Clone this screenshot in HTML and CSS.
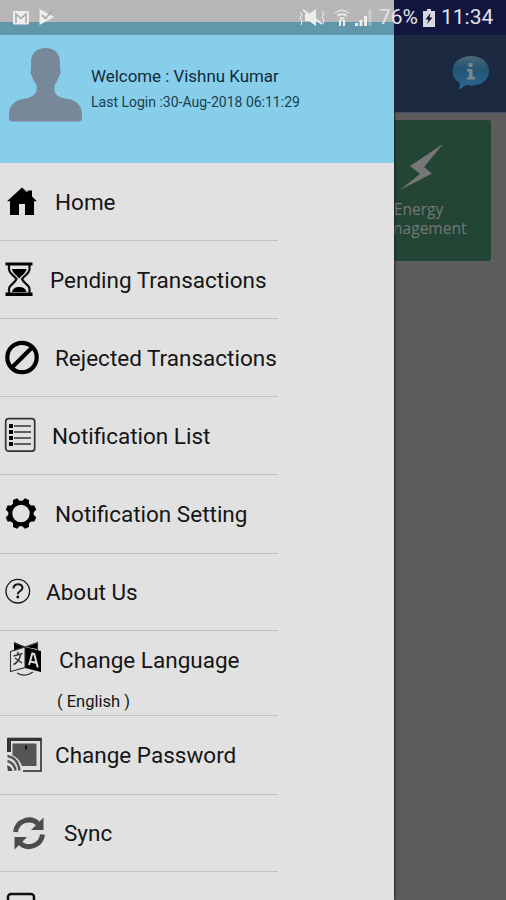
FILE: index.html
```html
<!DOCTYPE html>
<html lang="en">
<head>
<meta charset="utf-8">
<title>Menu</title>
<link rel="stylesheet" href="styles.css">
</head>
<body>
<div class="app">
  <div class="screen">
    <header class="toolbar">
      <svg class="info" viewBox="0 0 38 36" width="38" height="36">
        <defs><linearGradient id="bubble" x1="0" y1="0" x2="0" y2="1"><stop offset="0" stop-color="#4c6878"/><stop offset=".4" stop-color="#235476"/><stop offset="1" stop-color="#286b8c"/></linearGradient></defs>
        <path d="M19 1C8.500 1 .5 7.500.5 16c0 5.500 3 9.500 7.500 12l-1 6.500 7.500-4.500c1.500.3 3 .5 4.500.5 10.500 0 18-6 18-14.500S29.500 1 19 1z" fill="url(#bubble)"/>
        <path d="M16.500 8h4v4h-4zM15 14h5.500v8H23v2.500h-8V22h2v-5.500h-2z" fill="#7c8589"/>
      </svg>
    </header>
    <section class="tile">
      <svg viewBox="0 0 46 48" width="46" height="48"><path d="M44 1 11 23l10 8L1 47l32-16.500-8-6.500z" fill="#777"/></svg>
      <p>Energy<br>Management</p>
    </section>
  </div>

  <aside class="drawer">
    <div class="profile">
      <svg viewBox="0 35 91 128" width="91" height="128"><path d="M45.500 48C36 48 31 54 31 62v8c-1 1-.5 4 .6 5 1 5 3.500 7.500 5 10v5c0 4-5 7-10 8.500C15 99.500 9 105 9 115v3q0 3.500 4 3.500h65q4 0 4-3.500v-3c0-10-6-15.500-17-16.500-6-1-10.500-4-10.500-8.500v-5c2-3 4-6 5-10 1.500-1 1.500-4 .5-5v-8c0-8-5-14-14.500-14z" fill="#778899"/></svg>
      <div class="who"><p class="name">Welcome : Vishnu Kumar</p><p class="login">Last Login :30-Aug-2018 06:11:29</p></div>
    </div>
    <nav>
      <a class="row"><svg viewBox="0 163 55 77" width="55" height="77"><path d="m22 187.500 5.500 5v-2h4.500v6l5 4.700h-3V215H25v-11h-6v11h-9v-13.800H7z"/></svg><span>Home</span></a>
      <a class="row"><svg viewBox="0 241 50 77" width="50" height="77"><path d="M5.500 262.500h27v3h-27zM5.500 292.500h27v3.500h-27z"/><path d="M9 265v4c0 5 6 7 7.500 10C15 283 9 285 9 289v4M29.500 265v4c0 5-6 7-7.500 10 1.500 4 7.500 6 7.500 10v4" fill="none" stroke="#111" stroke-width="2.200"/><path d="M12 269h14.500c-.5 4-5 6.500-7.300 9.500C17 275.500 12.500 273 12 269zM12 292c1-4 4-5 7.200-5s6.300 1 7.300 5z"/></svg><span>Pending Transactions</span></a>
      <a class="row"><svg viewBox="0 319 55 77" width="55" height="77"><g fill="none" stroke="#000" stroke-width="4.200"><circle cx="22" cy="357.500" r="14.700"/><path d="m11.700 367.800 20.600-20.600"/></g></svg><span>Rejected Transactions</span></a>
      <a class="row"><svg viewBox="0 397 52 77" width="52" height="77"><rect x="5.700" y="418.700" width="29" height="32.500" rx="3" fill="none" stroke="#333" stroke-width="1.700"/><path d="M14 426h17M14 432h17M14 438h17M14 444h17" stroke="#333" stroke-width="1.500"/><path d="M9 424h4v4H9zM9 430h4v4H9zM9 436h4v4H9zM9 442h4v4H9z"/></svg><span>Notification List</span></a>
      <a class="row tall"><svg viewBox="0 475 55 78" width="55" height="78"><g transform="translate(21 513.500)"><circle r="10.700" fill="none" stroke="#000" stroke-width="4"/><path id="tooth" d="M-4-11-2.300-15.500h4.600L4-11z" transform="rotate(22.500)"/><use href="#tooth" transform="rotate(45)"/><use href="#tooth" transform="rotate(90)"/><use href="#tooth" transform="rotate(135)"/><use href="#tooth" transform="rotate(180)"/><use href="#tooth" transform="rotate(225)"/><use href="#tooth" transform="rotate(270)"/><use href="#tooth" transform="rotate(315)"/></g></svg><span>Notification Setting</span></a>
      <a class="row short"><svg viewBox="0 554 46 76" width="46" height="76"><g fill="none" stroke="#111"><circle cx="17.800" cy="591.200" r="11.800" stroke-width="1.300"/><path d="M13.500 588.500c0-5.500 9-5.500 9-.8 0 3.200-4.700 3.300-4.700 6.500" stroke-width="2"/></g><circle cx="17.800" cy="597" r="1.400"/></svg><span>About Us</span></a>
      <a class="row language"><svg viewBox="0 631 59 84" width="59" height="84"><path d="m25 647 16 4v21l-16-4z"/><path d="m14 642 11 5-11 4zM26 647l11-4v6"/><path d="m10.500 651.500 14.500-4.500v20.500l-14.500 4zM25 647l12.500-4.500v8M14 643l11 4" fill="none" stroke="#333" stroke-width="1.100"/><path d="m13.500 656 9-2.500M17.500 652l.8 3M20.500 655c-1 5-3.500 8-7 9.500M15 658l7 5M17 673c5 3 11 2.500 16-1" fill="none" stroke="#333" stroke-width="1.400"/><path d="m29 665 3.300-11.500 2 .5 3.500 13.500M30.500 661.500l5.500 1.200" fill="none" stroke="#e1e1e1" stroke-width="1.900"/></svg><span>Change Language<small>( English )</small></span></a>
      <a class="row tall"><svg viewBox="0 716 55 78" width="55" height="78"><path d="M8 750v-11.500h33V771H23" fill="none" stroke="#222" stroke-width="1.500"/><path d="M7 738h34v3H11v11H7z" fill="#333"/><path d="M12.500 743.500h24V766H22q-3-8-9.500-10.500z" fill="#555"/><path d="M26 745.500v4" stroke="#111" stroke-width="2"/><path d="M7.500 756q10.500 2 12 14.500M7.500 761q7 2 8 9.500" fill="none" stroke="#555" stroke-width="2.400"/><path d="M7 765.500q4.500.5 5.500 5.500H8z" fill="#444"/></svg><span>Change Password</span></a>
      <a class="row short"><svg viewBox="0 795 64 76" width="64" height="76"><path d="M15.500 832a13.500 13.500 0 0 1 23-8M42.500 834.500a13.500 13.500 0 0 1-23 8" fill="none" stroke="#4c4c4c" stroke-width="5"/><path d="M43.500 817.500V830H31zM14.500 849.500V837H27z" fill="#4c4c4c"/></svg><span>Sync</span></a>
      <a class="row last"><svg viewBox="0 872 55 77" width="55" height="77"><rect x="8" y="893" width="26" height="32" rx="3" fill="none" stroke="#111" stroke-width="2.500"/></svg></a>
    </nav>
  </aside>

  <div class="status">
    <svg viewBox="0 0 60 35" width="60" height="35"><rect x="13" y="11" width="16" height="13.500" rx="1" fill="#eee"/><path d="M16 23v-9l5 4.500 5-4.500v9" fill="none" stroke="#aaa" stroke-width="1.600"/><path d="m39.500 9 14.500 8-14.500 8z" fill="#eee"/><path d="m42 15 3.500 3.500 7-8" fill="none" stroke="#aaa" stroke-width="1.800"/></svg>
    <svg class="signals" viewBox="298 0 80 35" width="80" height="35"><g fill="#eee"><path d="M305 14h4l7-5v17l-7-5h-4z"/><path d="M334.500 13q7.500-7 15 0l-7.500 8z" opacity=".75"/><path d="M339 20h2v6h-2zM343 20h2v6h-2zM355 23h3v3h-3zM359.500 20h3v6h-3zM364 16h3v10h-3z"/><path d="M368.500 9h3v17h-3z" opacity=".35"/></g><path d="m303 10 19 14" stroke="#eee" stroke-width="2"/><path d="M300 12l2 3-2 3 2 3-1 4M322 11l2 3-2 3 2 3-1 4" stroke="#eee" fill="none"/><path d="M335 15q7-6 14 0M338 18q4-4 8 0" fill="none" stroke="#999"/></svg>
    <span class="percent">76%</span>
    <svg viewBox="0 0 12 18" width="12" height="18"><path d="M4 0h4v2h4v16H0V2h4z" fill="#d8d8df"/><path d="M7.500 4 2.500 10.500h3L4 15l5.500-6.500h-3z" fill="#111331"/></svg>
    <span class="clock">11:34</span>
  </div>
</div>
</body>
</html>
```
FILE: styles.css
```css
* { box-sizing: border-box; }
body { margin: 0; font-family: Roboto, sans-serif; }
p { margin: 0; }
svg { display: block; flex: none; }
.app { position: relative; width: 506px; height: 900px; overflow: hidden; }
.screen { height: 900px; background: #5c5c5c; }
.toolbar { display: flex; justify-content: flex-end; height: 113px; padding: 55px 16px 0 0; background: #1b2a41; border-bottom: 1px solid #425064; }
.tile { display: flex; flex-direction: column; align-items: center; width: 145px; height: 141px; margin: 7px 0 0 346px; padding-top: 23px; background: #234536; border-radius: 3px; color: #777; font: 15.5px/19px "Open Sans", sans-serif; text-align: center; }
.tile svg { margin: 0 0 9px 6px; }
.drawer { position: absolute; top: 0; left: 0; width: 394px; height: 900px; padding-top: 35px; background: #e1e1e1; box-shadow: 1px 0 2px #222; overflow: hidden; }
.profile { display: flex; height: 128px; background: #87ceeb; }
.who { padding-top: 31px; color: #102a3b; white-space: nowrap; }
.name { font-size: 16.9px; line-height: 20px; }
.login { margin-top: 7px; font-size: 14px; line-height: 18px; color: #1c3e50; }
.row { display: flex; align-items: center; width: 278px; height: 78px; border-bottom: 1px solid #c1c1c1; color: #151515; font-size: 22.5px; line-height: 28px; white-space: nowrap; }
.tall { height: 79px; }
.short { height: 77px; }
.language { height: 85px; align-items: flex-start; }
.language span { padding-top: 15px; }
.language small { display: block; margin: 15px 0 0 -2px; font-size: 16.5px; line-height: 26px; }
.last { border: 0; }
.status { position: absolute; top: 0; left: 0; width: 506px; height: 35px; display: flex; align-items: center; color: #e3e3e8; font-size: 21px; line-height: 35px; background: linear-gradient(to right, transparent 394px, #111640 394px), linear-gradient(#b7b7b7 22px, #6197ab 22px); }
.signals { margin-left: 238px; }
.percent { width: 44px; margin-left: 1px; }
.clock { margin-left: 6px; }
```
